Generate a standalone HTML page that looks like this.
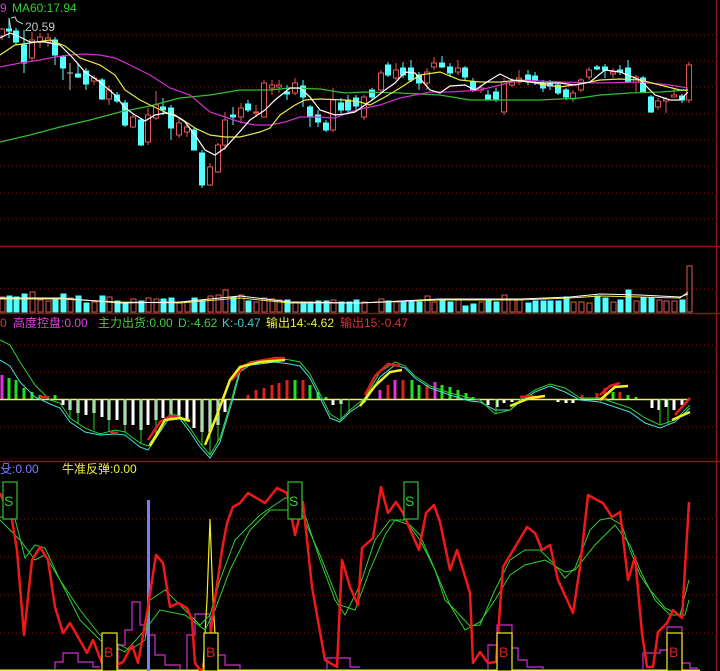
<!DOCTYPE html>
<html><head><meta charset="utf-8"><style>
html,body{margin:0;padding:0;background:#000;width:720px;height:671px;overflow:hidden}
svg{display:block}
text{font-family:"Liberation Sans","Noto Sans CJK SC",sans-serif;font-size:12px}
</style></head><body>
<svg width="720" height="671" viewBox="0 0 720 671" xmlns="http://www.w3.org/2000/svg">
<rect width="720" height="671" fill="#000"/>
<g stroke="#7a1010" stroke-width="1" stroke-dasharray="1,3">
<line x1="0" y1="35" x2="716" y2="35"/><line x1="0" y1="61" x2="716" y2="61"/><line x1="0" y1="87" x2="716" y2="87"/><line x1="0" y1="114" x2="716" y2="114"/><line x1="0" y1="140" x2="716" y2="140"/><line x1="0" y1="166" x2="716" y2="166"/><line x1="0" y1="193" x2="716" y2="193"/><line x1="0" y1="219" x2="716" y2="219"/>
<line x1="0" y1="289" x2="716" y2="289"/>
<line x1="0" y1="345" x2="716" y2="345"/><line x1="0" y1="372" x2="716" y2="372"/><line x1="0" y1="427" x2="716" y2="427"/>
<line x1="0" y1="519" x2="716" y2="519"/><line x1="0" y1="557" x2="716" y2="557"/><line x1="0" y1="595" x2="716" y2="595"/><line x1="0" y1="633" x2="716" y2="633"/>
</g>
<g stroke="#8a1515" stroke-width="1.5">
<line x1="0" y1="246.5" x2="720" y2="246.5"/><line x1="0" y1="313.5" x2="720" y2="313.5"/><line x1="0" y1="461.5" x2="720" y2="461.5"/><line x1="716.5" y1="0" x2="716.5" y2="671"/>
</g>
<text x="0" y="12" fill="#d040d0">9</text><text x="12" y="12" fill="#30d030">MA60:17.94</text>
<path d="M9 18 L11 30 M11 18 L15 17 L17 21 L23 24" stroke="#ccc" fill="none"/>
<text x="25" y="31" fill="#c8c8c8">20.59</text>
<g stroke-width="1">
<g stroke="#e05858" fill="#000">
<line x1="2" y1="28" x2="2" y2="40"/><rect x="-0.5" y="29" width="5" height="7"/>
<line x1="32" y1="32" x2="32" y2="62"/><rect x="29.5" y="40" width="5" height="18"/>
<line x1="40" y1="33" x2="40" y2="48"/><rect x="37.5" y="37" width="5" height="5"/>
<line x1="48" y1="33" x2="48" y2="47"/><rect x="45.5" y="38" width="5" height="4"/>
<line x1="94" y1="75" x2="94" y2="85"/><rect x="91.5" y="78" width="5" height="3"/>
<line x1="109" y1="85" x2="109" y2="105"/><rect x="106.5" y="90" width="5" height="9"/>
<line x1="133" y1="113" x2="133" y2="128"/><rect x="130.5" y="117" width="5" height="10"/>
<line x1="148" y1="108" x2="148" y2="145"/><rect x="145.5" y="115" width="5" height="27"/>
<line x1="156" y1="91" x2="156" y2="120"/><rect x="153.5" y="105" width="5" height="13"/>
<line x1="179" y1="118" x2="179" y2="138"/><rect x="176.5" y="123" width="5" height="12"/>
<line x1="187" y1="123" x2="187" y2="137"/><rect x="184.5" y="127" width="5" height="5"/>
<line x1="210" y1="163" x2="210" y2="186"/><rect x="207.5" y="167" width="5" height="18"/>
<line x1="218" y1="143" x2="218" y2="173"/><rect x="215.5" y="145" width="5" height="27"/>
<line x1="225" y1="112" x2="225" y2="150"/><rect x="222.5" y="120" width="5" height="25"/>
<line x1="241" y1="103" x2="241" y2="123"/><rect x="238.5" y="108" width="5" height="9"/>
<line x1="256" y1="105" x2="256" y2="117"/><rect x="253.5" y="112" width="5" height="1"/>
<line x1="264" y1="80" x2="264" y2="117"/><rect x="261.5" y="83" width="5" height="34"/>
<line x1="272" y1="80" x2="272" y2="95"/><rect x="269.5" y="85" width="5" height="3"/>
<line x1="279" y1="80" x2="279" y2="93"/><rect x="276.5" y="85" width="5" height="2"/>
<line x1="295" y1="78" x2="295" y2="95"/><rect x="292.5" y="83" width="5" height="10"/>
<line x1="333" y1="88" x2="333" y2="132"/><rect x="330.5" y="100" width="5" height="30"/>
<line x1="364" y1="95" x2="364" y2="120"/><rect x="361.5" y="97" width="5" height="20"/>
<line x1="381" y1="70" x2="381" y2="92"/><rect x="378.5" y="73" width="5" height="17"/>
<line x1="396" y1="63" x2="396" y2="80"/><rect x="393.5" y="70" width="5" height="8"/>
<line x1="427" y1="68" x2="427" y2="90"/><rect x="424.5" y="72" width="5" height="11"/>
<line x1="434" y1="57" x2="434" y2="70"/><rect x="431.5" y="63" width="5" height="4"/>
<line x1="458" y1="60" x2="458" y2="75"/><rect x="455.5" y="68" width="5" height="4"/>
<line x1="481" y1="85" x2="481" y2="93"/><rect x="478.5" y="88" width="5" height="2"/>
<line x1="504" y1="78" x2="504" y2="115"/><rect x="501.5" y="82" width="5" height="30"/>
<line x1="512" y1="78" x2="512" y2="87"/><rect x="509.5" y="82" width="5" height="3"/>
<line x1="519" y1="70" x2="519" y2="85"/><rect x="516.5" y="78" width="5" height="4"/>
<line x1="573" y1="90" x2="573" y2="102"/><rect x="570.5" y="93" width="5" height="6"/>
<line x1="581" y1="78" x2="581" y2="92"/><rect x="578.5" y="80" width="5" height="10"/>
<line x1="589" y1="67" x2="589" y2="80"/><rect x="586.5" y="70" width="5" height="7"/>
<line x1="613" y1="68" x2="613" y2="78"/><rect x="610.5" y="72" width="5" height="2"/>
<line x1="636" y1="75" x2="636" y2="93"/><rect x="633.5" y="77" width="5" height="5"/>
<line x1="658" y1="98" x2="658" y2="110"/><rect x="655.5" y="101" width="5" height="6"/>
<line x1="666" y1="97" x2="666" y2="113"/><rect x="663.5" y="99" width="5" height="2"/>
<line x1="674" y1="88" x2="674" y2="97"/><rect x="671.5" y="95" width="5" height="2"/>
<line x1="689" y1="62" x2="689" y2="103"/><rect x="686.5" y="65" width="5" height="35"/>
</g>
<g stroke="#54ffff" fill="#54ffff">
<line x1="9" y1="18" x2="9" y2="38"/><rect x="6.5" y="29" width="5" height="2"/>
<line x1="16" y1="28" x2="16" y2="45"/><rect x="13.5" y="31" width="5" height="11"/>
<line x1="24" y1="30" x2="24" y2="73"/><rect x="21.5" y="45" width="5" height="18"/>
<line x1="55" y1="37" x2="55" y2="65"/><rect x="52.5" y="40" width="5" height="15"/>
<line x1="63" y1="55" x2="63" y2="80"/><rect x="60.5" y="57" width="5" height="11"/>
<line x1="78" y1="63" x2="78" y2="78"/><rect x="75.5" y="74" width="5" height="3"/>
<line x1="86" y1="68" x2="86" y2="90"/><rect x="83.5" y="71" width="5" height="13"/>
<line x1="102" y1="78" x2="102" y2="100"/><rect x="99.5" y="80" width="5" height="19"/>
<line x1="117" y1="92" x2="117" y2="103"/><rect x="114.5" y="95" width="5" height="6"/>
<line x1="125" y1="100" x2="125" y2="127"/><rect x="122.5" y="103" width="5" height="22"/>
<line x1="141" y1="118" x2="141" y2="146"/><rect x="138.5" y="120" width="5" height="25"/>
<line x1="163" y1="98" x2="163" y2="115"/><rect x="160.5" y="107" width="5" height="3"/>
<line x1="171" y1="105" x2="171" y2="140"/><rect x="168.5" y="108" width="5" height="20"/>
<line x1="194" y1="128" x2="194" y2="150"/><rect x="191.5" y="130" width="5" height="20"/>
<line x1="202" y1="150" x2="202" y2="188"/><rect x="199.5" y="153" width="5" height="32"/>
<line x1="233" y1="107" x2="233" y2="125"/><rect x="230.5" y="115" width="5" height="2"/>
<line x1="248" y1="100" x2="248" y2="112"/><rect x="245.5" y="104" width="5" height="6"/>
<line x1="287" y1="85" x2="287" y2="100"/><rect x="284.5" y="92" width="5" height="2"/>
<line x1="303" y1="80" x2="303" y2="107"/><rect x="300.5" y="86" width="5" height="11"/>
<line x1="310" y1="105" x2="310" y2="127"/><rect x="307.5" y="107" width="5" height="10"/>
<line x1="318" y1="110" x2="318" y2="127"/><rect x="315.5" y="115" width="5" height="7"/>
<line x1="326" y1="120" x2="326" y2="132"/><rect x="323.5" y="123" width="5" height="7"/>
<line x1="341" y1="98" x2="341" y2="113"/><rect x="338.5" y="103" width="5" height="7"/>
<line x1="348" y1="95" x2="348" y2="114"/><rect x="345.5" y="100" width="5" height="10"/>
<line x1="356" y1="95" x2="356" y2="110"/><rect x="353.5" y="98" width="5" height="8"/>
<line x1="372" y1="88" x2="372" y2="100"/><rect x="369.5" y="90" width="5" height="7"/>
<line x1="388" y1="62" x2="388" y2="77"/><rect x="385.5" y="65" width="5" height="10"/>
<line x1="403" y1="62" x2="403" y2="78"/><rect x="400.5" y="68" width="5" height="7"/>
<line x1="411" y1="60" x2="411" y2="82"/><rect x="408.5" y="68" width="5" height="12"/>
<line x1="419" y1="72" x2="419" y2="90"/><rect x="416.5" y="75" width="5" height="8"/>
<line x1="442" y1="56" x2="442" y2="68"/><rect x="439.5" y="63" width="5" height="4"/>
<line x1="450" y1="63" x2="450" y2="77"/><rect x="447.5" y="67" width="5" height="6"/>
<line x1="465" y1="66" x2="465" y2="80"/><rect x="462.5" y="68" width="5" height="9"/>
<line x1="473" y1="78" x2="473" y2="92"/><rect x="470.5" y="82" width="5" height="8"/>
<line x1="488" y1="90" x2="488" y2="100"/><rect x="485.5" y="95" width="5" height="4"/>
<line x1="496" y1="88" x2="496" y2="102"/><rect x="493.5" y="92" width="5" height="8"/>
<line x1="528" y1="70" x2="528" y2="85"/><rect x="525.5" y="75" width="5" height="7"/>
<line x1="535" y1="72" x2="535" y2="85"/><rect x="532.5" y="76" width="5" height="4"/>
<line x1="543" y1="80" x2="543" y2="92"/><rect x="540.5" y="83" width="5" height="5"/>
<line x1="550" y1="80" x2="550" y2="90"/><rect x="547.5" y="83" width="5" height="3"/>
<line x1="558" y1="82" x2="558" y2="95"/><rect x="555.5" y="85" width="5" height="8"/>
<line x1="566" y1="88" x2="566" y2="100"/><rect x="563.5" y="90" width="5" height="7"/>
<line x1="597" y1="65" x2="597" y2="70"/><rect x="594.5" y="67" width="5" height="2"/>
<line x1="605" y1="64" x2="605" y2="78"/><rect x="602.5" y="67" width="5" height="3"/>
<line x1="620" y1="65" x2="620" y2="75"/><rect x="617.5" y="70" width="5" height="2"/>
<line x1="628" y1="60" x2="628" y2="83"/><rect x="625.5" y="68" width="5" height="14"/>
<line x1="643" y1="76" x2="643" y2="93"/><rect x="640.5" y="78" width="5" height="14"/>
<line x1="651" y1="95" x2="651" y2="113"/><rect x="648.5" y="97" width="5" height="15"/>
<line x1="682" y1="94" x2="682" y2="103"/><rect x="679.5" y="96" width="5" height="4"/>
</g>
<line x1="70" y1="63" x2="70" y2="90" stroke="#bbb"/><line x1="67" y1="73" x2="73" y2="73" stroke="#bbb"/>
</g>
<g fill="none" stroke-width="1.2">
<polyline stroke="#30c030" points="0,142 30,135 60,127 90,120 120,112 150,106 180,98 210,95 240,90 270,90 290,88 320,89 345,93 365,92 400,93 440,95 470,100 540,100 580,98 600,95 630,93 660,92 688,90"/>
<polyline stroke="#d030d0" points="0,67 20,63 40,60 55,57 70,55 85,54 100,55 115,58 130,65 150,75 170,88 190,95 210,112 225,117 240,122 255,125 270,125 285,122 300,117 315,117 335,118 350,112 365,108 380,105 400,98 430,92 450,92 480,90 520,80 560,82 600,83 640,82 670,85 688,88"/>
<polyline stroke="#e8e84a" points="0,55 15,45 30,43 50,40 65,46 80,58 100,65 115,75 125,90 140,100 150,105 165,112 180,118 195,128 210,135 225,137 240,137 260,132 270,128 280,115 295,105 305,100 320,99 345,100 360,102 370,105 385,97 400,88 420,75 440,72 460,80 480,82 500,82 520,80 540,84 560,87 580,84 600,80 620,79 640,80 660,85 680,90 688,90"/>
<polyline stroke="#fff" points="0,38 10,33 20,37 30,42 45,42 60,45 72,57 85,72 100,82 115,95 125,108 135,115 145,121 155,115 165,113 175,115 185,122 195,135 205,150 215,155 225,148 235,137 250,120 265,110 275,100 290,88 300,88 310,97 320,110 335,115 345,114 355,112 365,105 375,98 385,90 395,83 405,72 415,73 430,90 440,93 450,86 465,85 475,90 490,80 500,74 512,80 530,82 545,83 560,83 575,85 590,82 605,70 620,72 640,80 655,95 670,100 680,100 688,92"/>
</g>
<g stroke-width="1">
<g fill="#54ffff" stroke="#54ffff">
<rect x="7" y="296" width="5" height="16"/><rect x="14" y="297" width="5" height="15"/><rect x="22" y="294" width="5" height="18"/><rect x="53" y="299" width="5" height="13"/><rect x="61" y="294" width="5" height="18"/><rect x="76" y="296" width="5" height="16"/><rect x="84" y="303" width="5" height="9"/><rect x="100" y="296" width="5" height="16"/><rect x="115" y="301" width="5" height="11"/><rect x="123" y="303" width="5" height="9"/><rect x="139" y="301" width="5" height="11"/><rect x="161" y="299" width="5" height="13"/><rect x="169" y="298" width="5" height="14"/><rect x="192" y="298" width="5" height="14"/><rect x="200" y="300" width="5" height="12"/><rect x="231" y="297" width="5" height="15"/><rect x="246" y="301" width="5" height="11"/><rect x="285" y="300" width="5" height="12"/><rect x="301" y="302" width="5" height="10"/><rect x="308" y="302" width="5" height="10"/><rect x="316" y="301" width="5" height="11"/><rect x="324" y="301" width="5" height="11"/><rect x="339" y="302" width="5" height="10"/><rect x="347" y="302" width="5" height="10"/><rect x="354" y="300" width="5" height="12"/><rect x="386" y="301" width="5" height="11"/><rect x="401" y="302" width="5" height="10"/><rect x="409" y="301" width="5" height="11"/><rect x="417" y="302" width="5" height="10"/><rect x="440" y="301" width="5" height="11"/><rect x="448" y="302" width="5" height="10"/><rect x="463" y="306" width="5" height="6"/><rect x="471" y="304" width="5" height="8"/><rect x="486" y="301" width="5" height="11"/><rect x="494" y="302" width="5" height="10"/><rect x="526" y="303" width="5" height="9"/><rect x="533" y="301" width="5" height="11"/><rect x="541" y="301" width="5" height="11"/><rect x="548" y="301" width="5" height="11"/><rect x="556" y="301" width="5" height="11"/><rect x="564" y="297" width="5" height="15"/><rect x="595" y="296" width="5" height="16"/><rect x="603" y="298" width="5" height="14"/><rect x="618" y="300" width="5" height="12"/><rect x="626" y="290" width="5" height="22"/><rect x="641" y="298" width="5" height="14"/><rect x="649" y="298" width="5" height="14"/><rect x="680" y="300" width="5" height="12"/>
</g>
<g fill="none" stroke="#e05858">
<rect x="0" y="297" width="5" height="15"/><rect x="30" y="292" width="5" height="20"/><rect x="38" y="300" width="5" height="12"/><rect x="46" y="301" width="5" height="11"/><rect x="68" y="298" width="5" height="14"/><rect x="92" y="302" width="5" height="10"/><rect x="107" y="297" width="5" height="15"/><rect x="131" y="299" width="5" height="13"/><rect x="146" y="298" width="5" height="14"/><rect x="154" y="299" width="5" height="13"/><rect x="177" y="302" width="5" height="10"/><rect x="185" y="302" width="5" height="10"/><rect x="208" y="296" width="5" height="16"/><rect x="216" y="295" width="5" height="17"/><rect x="223" y="290" width="5" height="22"/><rect x="239" y="295" width="5" height="17"/><rect x="254" y="302" width="5" height="10"/><rect x="262" y="298" width="5" height="14"/><rect x="270" y="299" width="5" height="13"/><rect x="277" y="300" width="5" height="12"/><rect x="293" y="302" width="5" height="10"/><rect x="331" y="300" width="5" height="12"/><rect x="362" y="302" width="5" height="10"/><rect x="379" y="299" width="5" height="13"/><rect x="394" y="302" width="5" height="10"/><rect x="425" y="296" width="5" height="16"/><rect x="432" y="302" width="5" height="10"/><rect x="456" y="299" width="5" height="13"/><rect x="479" y="302" width="5" height="10"/><rect x="502" y="295" width="5" height="17"/><rect x="510" y="299" width="5" height="13"/><rect x="517" y="299" width="5" height="13"/><rect x="571" y="302" width="5" height="10"/><rect x="579" y="302" width="5" height="10"/><rect x="587" y="303" width="5" height="9"/><rect x="611" y="302" width="5" height="10"/><rect x="634" y="301" width="5" height="11"/><rect x="657" y="300" width="5" height="12"/><rect x="664" y="301" width="5" height="11"/><rect x="672" y="301" width="5" height="11"/><rect x="687" y="266" width="5" height="46"/>
</g>
</g>
<polyline fill="none" stroke="#e8e84a" points="0,299 60,299 120,302 180,303 240,298 290,303 360,303 440,300 520,300 570,298 600,296 640,297 680,298 688,292"/>
<polyline fill="none" stroke="#fff" points="0,298 60,298 120,303 180,302 240,296 290,302 360,303 440,299 520,299 570,297 600,294 640,295 680,297 688,294"/>
<text x="0" y="327" fill="#e03030">0</text>
<text x="13" y="327" fill="#e040e0">高度控盘:0.00</text>
<text x="98" y="327" fill="#40d040">主力出货:0.00</text>
<text x="178" y="327" fill="#40d040">D:-4.62</text>
<text x="222" y="327" fill="#40d0d0">K:-0.47</text>
<text x="266" y="327" fill="#f0f040">输出14:-4.62</text>
<text x="340" y="327" fill="#e03030">输出15:-0.47</text>
<g stroke-width="3">
<line x1="2" y1="399" x2="2" y2="375" stroke="#e030e0"/><line x1="9" y1="399" x2="9" y2="378" stroke="#20e020"/><line x1="16" y1="399" x2="16" y2="380" stroke="#20e020"/><line x1="24" y1="399" x2="24" y2="388" stroke="#20e020"/><line x1="32" y1="399" x2="32" y2="392" stroke="#20e020"/><line x1="40" y1="399" x2="40" y2="395" stroke="#20e020"/><line x1="48" y1="399" x2="48" y2="396" stroke="#d02020"/><line x1="55" y1="399" x2="55" y2="395" stroke="#20e020"/>
<g stroke="#fff">
<line x1="63" y1="399" x2="63" y2="405"/><line x1="70" y1="399" x2="70" y2="410"/><line x1="78" y1="399" x2="78" y2="413"/><line x1="86" y1="399" x2="86" y2="415"/><line x1="94" y1="399" x2="94" y2="413"/><line x1="102" y1="399" x2="102" y2="417"/><line x1="109" y1="399" x2="109" y2="420"/><line x1="117" y1="399" x2="117" y2="420"/><line x1="125" y1="399" x2="125" y2="425"/><line x1="133" y1="399" x2="133" y2="425"/><line x1="141" y1="399" x2="141" y2="430"/><line x1="148" y1="399" x2="148" y2="425"/><line x1="156" y1="399" x2="156" y2="420"/><line x1="163" y1="399" x2="163" y2="418"/><line x1="171" y1="399" x2="171" y2="418"/><line x1="179" y1="399" x2="179" y2="418"/><line x1="187" y1="399" x2="187" y2="420"/><line x1="194" y1="399" x2="194" y2="428"/><line x1="202" y1="399" x2="202" y2="432"/><line x1="210" y1="399" x2="210" y2="432"/><line x1="218" y1="399" x2="218" y2="425"/><line x1="225" y1="399" x2="225" y2="412"/>
<line x1="333" y1="399" x2="333" y2="405"/><line x1="341" y1="399" x2="341" y2="404"/><line x1="488" y1="399" x2="488" y2="405"/><line x1="497" y1="399" x2="497" y2="407"/><line x1="504" y1="399" x2="504" y2="403"/><line x1="512" y1="399" x2="512" y2="402"/><line x1="558" y1="399" x2="558" y2="402"/><line x1="566" y1="399" x2="566" y2="403"/><line x1="573" y1="399" x2="573" y2="403"/><line x1="652" y1="399" x2="652" y2="408"/><line x1="659" y1="399" x2="659" y2="410"/><line x1="666" y1="399" x2="666" y2="407"/><line x1="674" y1="399" x2="674" y2="410"/><line x1="682" y1="399" x2="682" y2="405"/>
</g>
<g stroke="#d82020">
<line x1="248" y1="399" x2="248" y2="395"/><line x1="256" y1="399" x2="256" y2="390"/><line x1="264" y1="399" x2="264" y2="388"/><line x1="272" y1="399" x2="272" y2="385"/><line x1="279" y1="399" x2="279" y2="383"/><line x1="287" y1="399" x2="287" y2="380"/><line x1="303" y1="399" x2="303" y2="380"/>
<line x1="388" y1="399" x2="388" y2="385"/><line x1="403" y1="399" x2="403" y2="380"/><line x1="427" y1="399" x2="427" y2="385"/><line x1="582" y1="399" x2="582" y2="395"/><line x1="597" y1="399" x2="597" y2="393"/><line x1="605" y1="399" x2="605" y2="388"/><line x1="620" y1="399" x2="620" y2="392"/>
</g>
<g stroke="#20e020">
<line x1="295" y1="399" x2="295" y2="380"/><line x1="310" y1="399" x2="310" y2="385"/><line x1="318" y1="399" x2="318" y2="392"/><line x1="326" y1="399" x2="326" y2="397"/>
<line x1="412" y1="399" x2="412" y2="380"/><line x1="419" y1="399" x2="419" y2="385"/><line x1="442" y1="399" x2="442" y2="385"/><line x1="450" y1="399" x2="450" y2="387"/><line x1="458" y1="399" x2="458" y2="390"/><line x1="466" y1="399" x2="466" y2="393"/><line x1="473" y1="399" x2="473" y2="397"/><line x1="613" y1="399" x2="613" y2="392"/><line x1="628" y1="399" x2="628" y2="395"/><line x1="636" y1="399" x2="636" y2="397"/>
</g>
<g stroke="#e030e0"><line x1="380" y1="399" x2="380" y2="390"/><line x1="395" y1="399" x2="395" y2="380"/><line x1="435" y1="399" x2="435" y2="382"/></g>
</g>
<line x1="0" y1="399.5" x2="690" y2="399.5" stroke="#f0f060" stroke-width="1.5"/>
<g fill="none">
<polyline stroke="#40e0e0" stroke-width="1" points="0,360 10,366 20,382 35,397 50,404 60,408 70,422 85,432 100,435 115,434 125,435 140,447 148,450 160,432 170,417 180,419 190,432 200,447 210,458 220,442 232,402 240,372 250,365 260,364 275,362 290,364 300,366 310,378 320,398 330,418 340,422 350,412 365,402 380,377 395,365 405,368 415,378 430,388 450,395 470,401 480,402 495,410 510,410 520,402 535,392 550,386 565,392 580,400 600,402 630,412 645,423 660,428 675,422 690,408"/>
<polyline stroke="#30d030" stroke-width="1" points="0,340 10,345 20,362 35,385 50,400 60,403 70,418 85,428 100,434 115,430 125,432 140,443 148,446 160,428 170,414 180,416 190,428 200,443 210,455 220,438 232,398 240,368 250,362 260,360 275,358 290,360 300,362 310,374 320,394 330,414 340,420 350,410 365,398 380,372 395,362 405,366 415,376 430,386 450,393 470,398 480,400 495,414 510,410 520,400 535,390 550,384 565,388 580,398 600,398 630,408 645,418 660,425 675,420 690,405"/>
<g stroke="#30d030" stroke-width="1"><line x1="70" y1="399" x2="70" y2="418"/><line x1="78" y1="399" x2="78" y2="424"/><line x1="94" y1="399" x2="94" y2="430"/><line x1="109" y1="399" x2="109" y2="432"/><line x1="125" y1="399" x2="125" y2="432"/><line x1="141" y1="399" x2="141" y2="444"/><line x1="156" y1="399" x2="156" y2="434"/><line x1="171" y1="399" x2="171" y2="414"/><line x1="202" y1="399" x2="202" y2="446"/><line x1="210" y1="399" x2="210" y2="455"/><line x1="218" y1="399" x2="218" y2="442"/><line x1="341" y1="399" x2="341" y2="419"/><line x1="349" y1="399" x2="349" y2="412"/><line x1="496" y1="399" x2="496" y2="414"/><line x1="660" y1="399" x2="660" y2="425"/><line x1="668" y1="399" x2="668" y2="424"/></g>
<g stroke="#e02020" stroke-width="2.5"><polyline points="148,440 160,422 170,416 180,418"/><polyline points="232,380 245,365 255,362 275,358 285,358"/><polyline points="365,395 375,376 388,364 400,366"/><polyline points="520,397 530,396 540,398"/><polyline points="600,395 610,386 620,383"/><polyline points="675,415 690,398"/><polyline points="40,397 48,397"/><polyline points="110,432 118,433"/></g>
<g stroke="#f0f020" stroke-width="2.5"><polyline points="150,446 165,420 180,418 190,421"/><polyline points="205,445 215,420 230,380 240,367 260,362 285,360"/><polyline points="360,406 375,386 390,372 402,370"/><polyline points="510,406 530,398 545,396"/><polyline points="600,400 615,387 628,386"/><polyline points="672,420 690,412"/></g>
</g>
<text x="0" y="473" fill="#7a7aff">殳:0.00</text>
<text x="62" y="473" fill="#f0f040">牛准反弹:0.00</text>
<g fill="none" stroke="#d030d0" stroke-width="1.2">
<path d="M55 671V662H63V653H78V662H93V667H100"/>
<path d="M118 671V645H125V630H132V602H140V625H147V635H155V655H165V665H180V671"/>
<path d="M187 671V635H195V614H210V640H218V655H225V665H240V671"/>
<path d="M327 671V658H350V667H360"/>
<path d="M488 671V645H497V625H512V648H518V660H527V667H543V671"/>
<path d="M643 671V653H660V650H667V627H682V663H690V668H697V671"/>
</g>
<line x1="0" y1="669.5" x2="700" y2="669.5" stroke="#d030d0" stroke-width="1"/>
<line x1="0" y1="670.5" x2="700" y2="670.5" stroke="#f0f040" stroke-width="1"/>
<line x1="148.5" y1="500" x2="148.5" y2="671" stroke="#7b7bff" stroke-width="3"/>
<polyline fill="none" stroke="#f0f020" stroke-width="1.2" points="203,668 207,600 210,519 213,600 217,668"/>
<polyline fill="none" stroke="#30d030" stroke-width="1" points="0,517 15,519 25,558 35,545 45,548 60,580 80,610 100,635 130,650 145,640 150,600 165,590 185,610 200,625 210,615 220,580 235,540 260,515 285,498 295,499 305,515 320,560 335,600 345,615 360,585 375,540 390,520 405,520 420,540 435,570 445,600 455,610 470,626 480,625 495,590 510,560 525,550 540,550 555,565 565,578 575,568 590,530 600,520 610,518 622,525 630,550 640,575 650,590 665,608 680,615 689,580"/>
<polyline fill="none" stroke="#30d030" stroke-width="1" points="0,520 20,540 35,560 45,555 60,580 80,620 100,640 125,652 145,630 160,610 185,615 205,630 215,610 230,570 250,530 270,510 290,510 300,510 320,555 340,605 355,610 370,570 385,535 395,520 410,525 420,535 435,570 450,605 465,630 480,622 495,600 510,575 525,565 545,560 565,572 575,570 595,545 615,525 630,545 640,570 655,600 670,615 685,615 689,600"/>
<polyline fill="none" stroke="#f01818" stroke-width="2.5" stroke-linejoin="round" points="0,493 12,520 17,550 24,635 32,560 40,547 48,560 55,607 63,633 70,623 78,637 87,653 93,640 102,663 110,668 123,662 132,645 138,663 147,613 156,555 163,563 170,607 178,603 187,608 192,620 195,663 200,670 207,667 213,613 222,550 227,523 233,507 240,503 248,493 265,503 277,488 287,493 295,535 303,502 312,587 325,660 337,667 342,560 350,587 358,605 362,548 373,538 381,487 388,513 396,502 403,513 419,550 426,513 434,505 440,522 450,570 457,550 470,593 473,663 480,652 488,663 496,662 503,567 515,547 527,527 535,533 542,550 550,545 558,580 573,613 580,567 588,495 597,500 603,503 612,517 620,512 628,580 635,557 642,633 647,667 653,667 658,632 667,623 673,610 682,618 689,502"/>
<g fill="#000" stroke="#30c030" stroke-width="1.2">
<rect x="3" y="482" width="14" height="37"/><rect x="288" y="482" width="14" height="37"/><rect x="404" y="482" width="14" height="37"/>
</g>
<g fill="#30d030"><text x="4" y="506" style="font-size:14px">S</text><text x="289" y="506" style="font-size:14px">S</text><text x="405" y="506" style="font-size:14px">S</text></g>
<g fill="#000" stroke="#f0f020" stroke-width="1.2">
<rect x="102" y="633" width="15" height="38"/><rect x="204" y="633" width="14" height="38"/><rect x="497" y="633" width="15" height="38"/><rect x="667" y="633" width="15" height="38"/>
</g>
<g fill="#e02020"><text x="104" y="657" style="font-size:14px">B</text><text x="206" y="657" style="font-size:14px">B</text><text x="499" y="657" style="font-size:14px">B</text><text x="669" y="657" style="font-size:14px">B</text></g>
</svg>
</body></html>
